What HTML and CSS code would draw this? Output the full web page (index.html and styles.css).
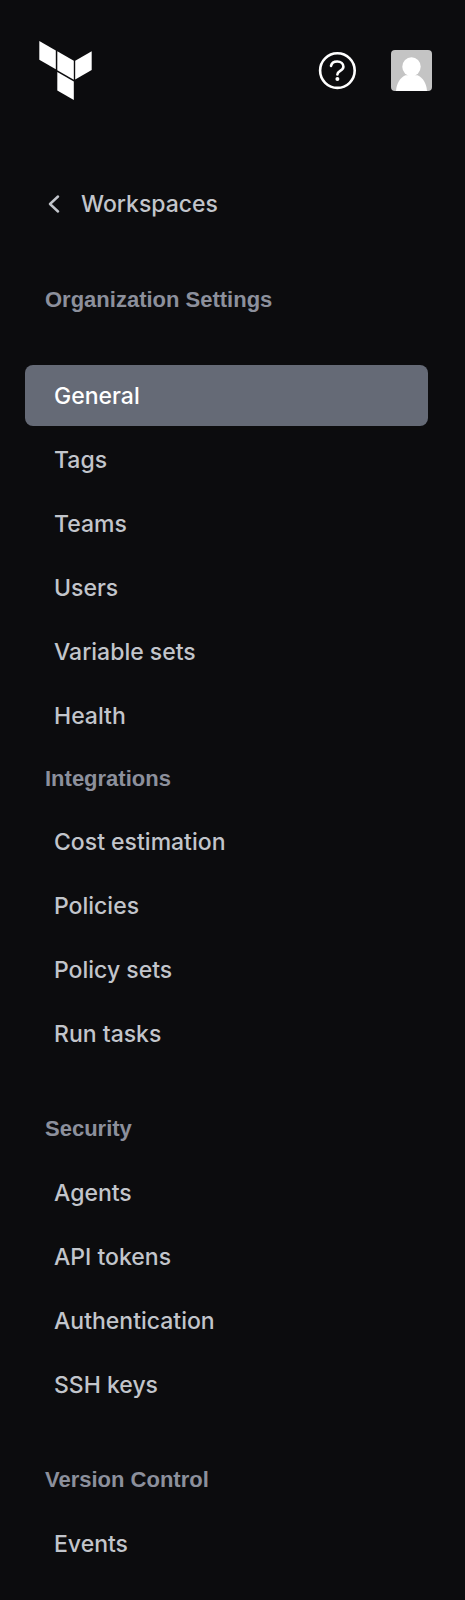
FILE: index.html
```
<!DOCTYPE html>
<html lang="en">
<head>
    <meta charset="utf-8">
    <meta name="viewport" content="width=device-width, initial-scale=1">
    <title>Organization Settings</title>
    <link rel="stylesheet" href="styles.css">
</head>
<body>
    <header class="topbar">
        <a href="#" class="logo" aria-label="Home">
            <svg width="53" height="59" viewBox="0 0 53 59" fill="#fff">
                <path d="M0.300 0l16.500 9.500v18.700L0.300 18.700z"/>
                <path d="M18.300 10.200l16.500 9.500v19L18.300 29.200z"/>
                <path d="M36.200 19.700L52.700 10.200v18.900L36.200 38.600z"/>
                <path d="M18.300 31l16.500 9.500v18.500L18.300 49.500z"/>
            </svg>
        </a>
        <div class="topbar-actions">
            <button type="button" class="icon-button" aria-label="Help">
                <svg width="38" height="38" viewBox="0 0 38 38" fill="none" stroke="#fff" stroke-linecap="round" stroke-linejoin="round">
                    <circle cx="19.400" cy="18.600" r="17.300" stroke-width="2.600"/>
                    <path d="M13 13.900C13.600 11.200 16 9.500 19.200 9.500c3.600 0 6.200 2.100 6.200 5.200 0 4.300-6 4.100-6 7.700" stroke-width="2.600"/>
                    <circle cx="19.400" cy="26.900" r="2" fill="#fff" stroke="none"/>
                </svg>
            </button>
            <button type="button" class="icon-button avatar" aria-label="Account">
                <svg width="41" height="41" viewBox="0 0 41 41" fill="#fff">
                    <rect width="41" height="41" fill="#c4c4c4"/>
                    <path d="M5 41C5.500 34 9 27.500 14.500 25.300h12C32 27.500 35.500 34 36 41z"/>
                    <ellipse cx="20.500" cy="16.800" rx="9.200" ry="9.500"/>
                </svg>
            </button>
        </div>
    </header>

    <nav class="sidebar">
        <a href="#" class="back-link">
            <svg width="12" height="18" viewBox="0 0 12 18" fill="none" stroke="#c2c5cb" stroke-width="2.400" stroke-linecap="round" stroke-linejoin="round">
                <path d="M10 1.500L2 9l8 7.500"/>
            </svg>
            Workspaces
        </a>

        <h2 class="nav-title first">Organization Settings</h2>
        <ul class="nav-list">
            <li><a href="#" class="nav-item active" aria-current="page">General</a></li>
            <li><a href="#" class="nav-item">Tags</a></li>
            <li><a href="#" class="nav-item">Teams</a></li>
            <li><a href="#" class="nav-item">Users</a></li>
            <li><a href="#" class="nav-item">Variable sets</a></li>
            <li><a href="#" class="nav-item">Health</a></li>
        </ul>

        <h2 class="nav-title">Integrations</h2>
        <ul class="nav-list">
            <li><a href="#" class="nav-item">Cost estimation</a></li>
            <li><a href="#" class="nav-item">Policies</a></li>
            <li><a href="#" class="nav-item">Policy sets</a></li>
            <li><a href="#" class="nav-item">Run tasks</a></li>
        </ul>

        <h2 class="nav-title spaced">Security</h2>
        <ul class="nav-list">
            <li><a href="#" class="nav-item">Agents</a></li>
            <li><a href="#" class="nav-item">API tokens</a></li>
            <li><a href="#" class="nav-item">Authentication</a></li>
            <li><a href="#" class="nav-item">SSH keys</a></li>
        </ul>

        <h2 class="nav-title spaced">Version Control</h2>
        <ul class="nav-list">
            <li><a href="#" class="nav-item">Events</a></li>
        </ul>
    </nav>
</body>
</html>
```
FILE: styles.css
```
* { box-sizing: border-box; }

body {
    margin: 0;
    background-color: #0c0c0e;
    color: #c2c5cb;
    font-family: Inter, "Liberation Sans", sans-serif;
    font-size: 23px;
    font-weight: 500;
    line-height: 28px;
}

a { color: inherit; text-decoration: none; }
svg { display: block; }

/* --- Top bar --- */
.topbar {
    display: flex;
    justify-content: space-between;
    align-items: center;
    padding: 41px 33px 0 39px;
}
.topbar-actions { display: flex; align-items: center; gap: 35px; }
.icon-button { padding: 0; border: none; background: none; cursor: pointer; }
.avatar { border-radius: 4px; overflow: hidden; }

/* --- Sidebar --- */
.sidebar { padding: 72px 37px 24px 25px; }
.back-link {
    display: flex;
    align-items: center;
    gap: 21px;
    height: 64px;
    padding-left: 23px;
}
.nav-title {
    display: flex;
    align-items: center;
    height: 61px;
    margin: 2px 0;
    padding-left: 20px;
    color: #8c909c;
    font-family: "Liberation Sans", sans-serif;
    font-size: 22px;
    font-weight: bold;
}
.nav-title.first { margin: 33px 0 35px; }
.nav-title.spaced { margin: 34px 0 3px; }

.nav-list {
    display: flex;
    flex-direction: column;
    gap: 3px;
    margin: 0;
    padding: 0;
    list-style: none;
}
.nav-item {
    display: flex;
    align-items: center;
    height: 61px;
    padding: 0 29px;
    border-radius: 8px;
}
.nav-item.active { background-color: #656a76; color: #fff; }
```
